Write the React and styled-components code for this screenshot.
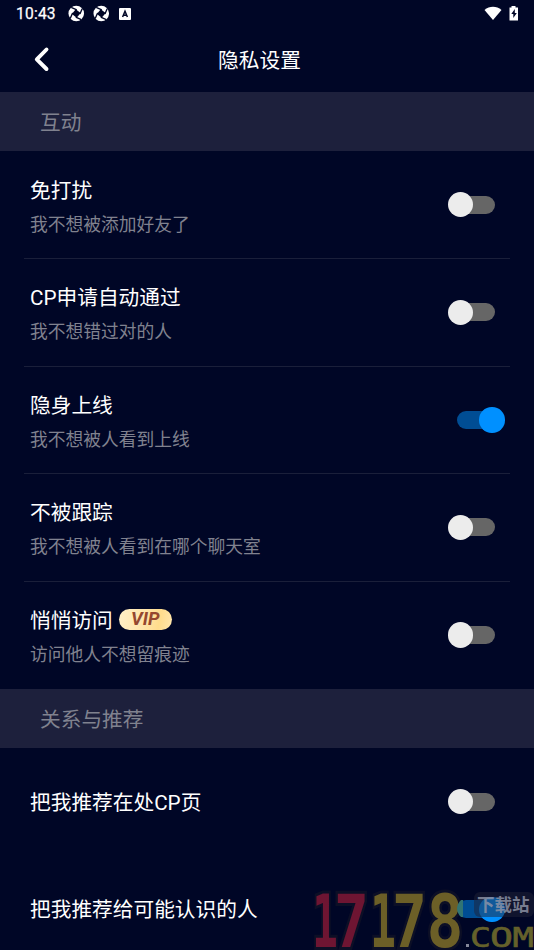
import React from "react";
import styled, { createGlobalStyle } from "styled-components";

const Global = createGlobalStyle`
  * { box-sizing: border-box; }
  body { margin: 0; background: #000626; overflow: hidden; }
`;
const Screen = styled.main`
  position: relative;
  width: 534px;
  height: 950px;
  overflow: hidden;
  background: #000626;
  color: #fff;
  font-family: Roboto, "Noto Sans CJK SC", sans-serif;
`;
const StatusBar = styled.div`
  display: flex;
  align-items: center;
  height: 28px;
  padding: 0 15px 0 16px;
`;
const Clock = styled.span`
  width: 52px;
  font-size: 15.6px;
  font-weight: 400;
  line-height: 28px;
  letter-spacing: 0.2px;
  -webkit-text-stroke: 0.25px #fff;
`;
const StatusIcons = styled.div`
  display: flex;
  align-items: center;
  flex: 1;
  gap: 8px;
  padding-bottom: 1px;
  svg { display: block; }
`;
const Header = styled.header`
  display: grid;
  grid-template-columns: 60px 1fr 60px;
  align-items: center;
  height: 64.4px;
`;
const Back = styled.button`
  display: flex;
  padding: 0 0 2px 32px;
  border: 0;
  background: none;
`;
const Title = styled.h1`
  margin: 1px 0 0 -15px;
  text-align: center;
  font-size: 20.7px;
  line-height: 30px;
  font-weight: 400;
`;
const SectionTitle = styled.h2`
  display: flex;
  align-items: center;
  height: 59px;
  margin: 0;
  padding: 0 40px 2px;
  background: #1d203c;
  color: #80828f;
  font-size: 20.7px;
  font-weight: 400;
`;
const Row = styled.div`
  display: flex;
  align-items: center;
  justify-content: space-between;
  height: 107.6px;
  margin: 0 24px;
  padding: 0 5px 0 6px;
  border-bottom: 1px solid ${(p) => (p.$line ? "#1a1f3a" : "transparent")};
`;
const Copy = styled.div`
  padding-top: ${(p) => (p.$double ? "4px" : "2px")};
`;
const Label = styled.div`
  display: flex;
  align-items: center;
  gap: 6px;
  font-size: 20.7px;
  line-height: 30px;
  white-space: nowrap;
`;
const Hint = styled.div`
  margin-top: 6px;
  color: #80828f;
  font-size: 17.75px;
  line-height: 26px;
  white-space: nowrap;
`;
const Vip = styled.span`
  width: 53px;
  height: 21px;
  margin-top: -3px;
  border-radius: 11px;
  background: linear-gradient(100deg, #fff0c8, #ffe4a8 50%, #ffdc8c 75%, #ffe6ae);
  color: #95472f;
  font: italic 700 18.5px/21px Roboto, sans-serif;
  text-align: center;
`;
const Track = styled.span`
  display: flex;
  align-items: center;
  width: 38px;
  height: 18px;
  margin-right: 10px;
  border-radius: 9px;
  background: ${(p) => (p.$on ? "#004d94" : "#666")};
`;
const Thumb = styled.span`
  flex: none;
  width: 25.5px;
  height: 25.5px;
  margin-left: ${(p) => (p.$on ? "22px" : "-9.5px")};
  border-radius: 50%;
  background: ${(p) => (p.$on ? "#0090ff" : "#ececec")};
`;
const Watermark = styled.svg`
  position: absolute;
  left: 304px;
  top: 884px;
`;

const Aperture = () => (
  <svg width="16.500" height="17" viewBox="0 0 17 17">
    <circle cx="8.5" cy="8.5" r="8" fill="#fff" />
    <path d="M8 4 13 8 9 13 4 9Z" fill="#000626" />
    <path d="M8.500 4.500 3.800 2.500M12.500 8.500 14.500 3.800M8.500 12.500 13.200 14.500M4.500 8.500 2.500 13.200" stroke="#000626" strokeWidth="1.400" strokeLinecap="round" />
  </svg>
);
const Switch = ({ on }) => (
  <Track $on={on}><Thumb $on={on} /></Track>
);
const Setting = ({ label, hint, on, vip, line }) => (
  <Row $line={line}>
    <Copy $double={!!hint}>
      <Label>{label}{vip && <Vip>VIP</Vip>}</Label>
      {hint && <Hint>{hint}</Hint>}
    </Copy>
    <Switch on={on} />
  </Row>
);

const digits = [
  ["1", 8, 26, "#6e1532"], ["7", 30, 35, "#6e1532"],
  ["1", 66, 26, "#6c5f27"], ["7", 88, 35, "#6c5f27"], ["8", 122.5, 37, "#6c5f27"],
];
const domain = [["C", 166, 21], ["O", 186, 23], ["M", 208.5, 21.5]];

export default function App() {
  return (
    <Screen>
      <Global />
      <StatusBar>
        <Clock>10:43</Clock>
        <StatusIcons>
          <Aperture />
          <Aperture />
          <svg width="14" height="12" viewBox="-2 0 14 12">
            <rect width="12" height="12" rx="1" fill="#fff" />
            <path d="M3.6 9 6 3.2 8.4 9M4.5 7.2h3" stroke="#000626" strokeWidth="1.5" fill="none" />
          </svg>
        </StatusIcons>
        <svg width="35" height="16" viewBox="0 0 35 16">
          <path d="M.5 4C5.500-.3 12.500-.3 17.500 4L9 14Z" fill="#fff" />
          <path d="M27.500 0h4v1.600H34V14.500h-8.500V1.600h2Z" fill="#fff" />
          <path d="M30.800 3 27.300 8h2v4l3.500-5h-2Z" fill="#000626" />
        </svg>
      </StatusBar>
      <Header>
        <Back aria-label="返回">
          <svg width="18" height="26" viewBox="0 0 18 26">
            <path d="M14.500 3.500 4.800 13.300l9.700 9.700" fill="none" stroke="#fff" strokeWidth="3.900" strokeLinecap="round" strokeLinejoin="round" />
          </svg>
        </Back>
        <Title>隐私设置</Title>
      </Header>
      <SectionTitle>互动</SectionTitle>
      <Setting line label="免打扰" hint="我不想被添加好友了" />
      <Setting line label="CP申请自动通过" hint="我不想错过对的人" />
      <Setting line on label="隐身上线" hint="我不想被人看到上线" />
      <Setting line label="不被跟踪" hint="我不想被人看到在哪个聊天室" />
      <Setting vip label="悄悄访问" hint="访问他人不想留痕迹" />
      <SectionTitle>关系与推荐</SectionTitle>
      <Setting label="把我推荐在处CP页" />
      <Setting on label="把我推荐给可能认识的人" />
      <Watermark width="230" height="66" viewBox="0 0 230 66">
        {digits.map(([d, x, w, fill], i) => (
          <text key={i} x={x} y="63" fill={fill} stroke="#0c0f26" strokeWidth="6" paintOrder="stroke"
            fontFamily="DejaVu Sans Mono" fontWeight="700" fontSize="73" textLength={w} lengthAdjust="spacingAndGlyphs">{d}</text>
        ))}
        <path d="M159 16v17h-2q-4-4-4-8.500t4-8.500Z" fill="#317474" />
        <rect x="170" y="8" width="60" height="25" rx="6" fill="#202235" opacity=".5" />
        <text x="173" y="27" fill="#9196a8" opacity=".8" fontFamily="Noto Sans CJK SC" fontWeight="700" fontSize="17.500">下载站</text>
        <rect x="162" y="60" width="3" height="3" fill="#85889b" />
        {domain.map(([c, x, w]) => (
          <text key={c} x={x} y="63" fill="#65612b" stroke="#65612b" strokeWidth=".6" fontFamily="DejaVu Sans Mono"
            fontSize="26.500" textLength={w} lengthAdjust="spacingAndGlyphs">{c}</text>
        ))}
      </Watermark>
    </Screen>
  );
}
